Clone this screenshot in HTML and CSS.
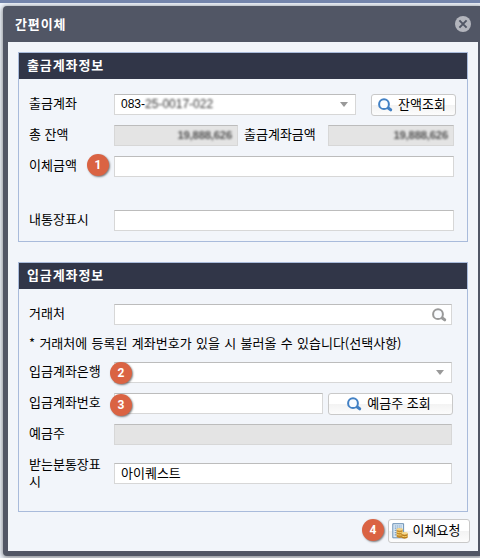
FILE: index.html
```html
<!DOCTYPE html>
<html lang="ko">
<head>
<meta charset="utf-8">
<title>간편이체</title>
<link rel="stylesheet" href="styles.css">
</head>
<body>
<svg class="defs" width="0" height="0">
  <defs>
    <symbol id="lens" viewBox="0 0 16 14">
      <path d="M10.5 9.5l3.2 2.3" fill="none" stroke="currentColor" stroke-width="3" stroke-linecap="round"/>
      <circle cx="7" cy="6.2" r="4.9" fill="#fafcff" stroke="currentColor" stroke-width="2"/>
    </symbol>
  </defs>
</svg>
<div class="dialog">
  <header class="titlebar">
    <h1>간편이체</h1>
    <svg class="close" viewBox="0 0 16 16"><circle cx="8" cy="8" r="8" fill="#b3b5bd"/><path d="M4.4 4.4l7.2 7.2M11.6 4.4l-7.2 7.2" stroke="#515665" stroke-width="2"/></svg>
  </header>
  <main class="content">
    <section class="panel withdraw">
      <h2>출금계좌정보</h2>
      <div class="row">
        <label>출금계좌</label>
        <div class="field select account"><span>083-</span><span class="masked">25-0017-022</span><i class="arrow"></i></div>
        <button class="btn balance"><svg class="lens"><use href="#lens"/></svg><span>잔액조회</span></button>
      </div>
      <div class="row">
        <label>총 잔액</label>
        <div class="field readonly total"><span class="masked sum">19,888,626</span></div>
        <label class="second">출금계좌금액</label>
        <div class="field readonly amount"><span class="masked sum">19,888,626</span></div>
      </div>
      <div class="row tall">
        <label>이체금액</label>
        <div class="field wide"></div>
        <b class="badge one">1</b>
      </div>
      <div class="row">
        <label>내통장표시</label>
        <div class="field wide"></div>
      </div>
    </section>
    <section class="panel deposit">
      <h2>입금계좌정보</h2>
      <div class="row">
        <label>거래처</label>
        <div class="field full"><svg class="lens gray"><use href="#lens"/></svg></div>
      </div>
      <p class="note">* 거래처에 등록된 계좌번호가 있을 시 불러올 수 있습니다(선택사항)</p>
      <div class="row">
        <label>입금계좌은행</label>
        <div class="field select full"><i class="arrow"></i></div>
        <b class="badge two">2</b>
      </div>
      <div class="row">
        <label>입금계좌번호</label>
        <div class="field number"></div>
        <button class="btn holder"><svg class="lens"><use href="#lens"/></svg><span>예금주 조회</span></button>
        <b class="badge three">3</b>
      </div>
      <div class="row">
        <label>예금주</label>
        <div class="field readonly full"></div>
      </div>
      <div class="row last">
        <label>받는분통장표시</label>
        <div class="field full"><span class="value">아이퀘스트</span></div>
      </div>
    </section>
    <footer class="actions">
      <b class="badge">4</b>
      <button class="btn submit">
        <svg class="coins" viewBox="0 0 16 16">
          <path d="M.8.7h10.8v14.1H.8z" fill="#dceaf6" stroke="#6c91b4"/>
          <path d="M2.7 3h7M2.7 5.2h7M2.7 7.4h7M2.7 9.6h4M2.7 11.8h4" stroke="#7da0c2" stroke-width="1.2" stroke-dasharray="1.4 .5"/>
          <path d="M4.6 6.3v7.5c1 1.5 5 1.5 6.1 0V6.3z" fill="#c48a2a"/>
          <ellipse cx="7.7" cy="6.3" rx="3.1" ry="1.4" fill="#f4d489"/>
          <path d="M4.7 8.8c1.2 1.1 4.9 1.1 6 0M4.7 11.2c1.2 1.1 4.9 1.1 6 0" fill="none" stroke="#f3d06f"/>
          <path d="M9.5 10.3v4.2c1 1.5 5 1.5 6.2 0v-4.2z" fill="#b97c1c"/>
          <ellipse cx="12.6" cy="10.3" rx="3.1" ry="1.4" fill="#f5da91"/>
          <path d="M9.6 12.8c1.2 1.1 4.9 1.1 6 0" fill="none" stroke="#f3ce68"/>
        </svg><span>이체요청</span>
      </button>
    </footer>
  </main>
</div>
</body>
</html>
```
FILE: styles.css
```css
* { box-sizing: border-box; }
body {
  margin: 0;
  width: 480px;
  height: 558px;
  overflow: hidden;
  padding: 3px 0 0 3px;
  border-top: 3px solid #7384aa;
  background: #eef3fb;
  font: 13px/17px "Noto Sans CJK KR", "Liberation Sans", sans-serif;
  color: #000;
}
.defs { display: block; }
h1, h2, p { margin: 0; }
.dialog {
  width: 480px;
  height: 550px;
  border-radius: 4px;
  background: #515665;
  padding: 0 5px 5px;
  box-shadow: 0 1px 4px 1px rgba(0, 0, 0, .4);
}
.titlebar {
  height: 36px;
  display: flex;
  align-items: center;
  padding: 0 10px 0 7px;
}
h1, h2 {
  font-size: 13px;
  line-height: 17px;
  font-weight: 700;
  letter-spacing: .9px;
  color: #fff;
}
.titlebar h1 { width: 60px; flex: none; margin-top: -2px; }
.close { width: 16px; height: 16px; flex: none; margin-left: 380px; }
.content { height: 509px; width: 470px; background: #f2f5fa; padding: 10px 10px 0; }
.panel { width: 450px; border: 1px solid #a9bbdb; padding: 0 0 0 10px; }
.withdraw { height: 190px; }
.deposit { height: 250px; margin-top: 20px; }
h2 { height: 26px; margin: 0 0 15px -10px; padding: 3px 0 0 8px; background: #313648; }
.row { position: relative; display: flex; height: 21px; margin-bottom: 10px; }
.row.tall { margin-bottom: 33px; }
label { width: 85px; flex: none; line-height: 17px; white-space: nowrap; }
.field {
  height: 21px;
  flex: none;
  display: flex;
  align-items: center;
  padding: 0 6px;
  background: #fff;
  border: 1px solid #d7d7d7;
  border-top-color: #bcbcbc;
}
.value { margin-top: -2px; }
.readonly { background: #e4e4e4; justify-content: flex-end; }
.account { width: 242px; font: 12px/17px "Liberation Sans", sans-serif; }
.total { width: 124px; }
.amount { width: 126px; }
.wide { width: 340px; }
.full { width: 338px; }
.number { width: 209px; }
.second { width: 90px; padding-left: 6px; }
.masked { font: 12px/17px "Liberation Sans", sans-serif; color: #333; filter: blur(1.1px); }
.sum { font-size: 11.3px; font-weight: 700; color: #555; letter-spacing: -.2px; margin-right: -1px; }
.arrow {
  margin-left: auto;
  margin-right: 1px;
  border: 4.5px solid transparent;
  border-top: 5px solid #999;
  border-bottom: 0;
}
.lens { width: 16px; height: 14px; flex: none; color: #4280c4; }
.gray { color: #999; margin-left: auto; margin-right: -2px; }
.btn {
  height: 22px;
  flex: none;
  display: flex;
  align-items: center;
  justify-content: center;
  gap: 5px;
  padding: 0 4px 0 0;
  border: 1px solid #c9c9c9;
  border-radius: 3px;
  background: linear-gradient(#fff 50%, #f3f3f3 51%, #fcfcfc);
  font: inherit;
  color: inherit;
}
.btn span { margin-top: -3px; }
.balance { width: 85px; margin-left: 15px; }
.holder { width: 125px; margin-left: 5px; }
.submit { width: 82px; height: 24px; padding-right: 6px; }
.coins { width: 16px; height: 16px; }
.badge {
  width: 22px;
  height: 22px;
  border-radius: 50%;
  background: #da6343;
  color: #fff;
  font: bold 12px/22px Roboto, sans-serif;
  text-align: center;
  box-shadow: 1px 1px 2px rgba(0, 0, 0, .5);
}
.row .badge { position: absolute; top: 0; }
.row .one { left: 58px; top: -2px; }
.row .two { left: 81px; }
.row .three { left: 81px; top: 1px; }
.note { height: 17px; margin: -1px 0 11px; white-space: nowrap; word-spacing: .7px; }
.last { margin-top: 18px; }
.last label { white-space: normal; width: 75px; margin: -8px 10px 0 0; }
.actions { display: flex; justify-content: flex-end; gap: 4px; padding: 7px 0 0; margin-right: -2px; }
```
